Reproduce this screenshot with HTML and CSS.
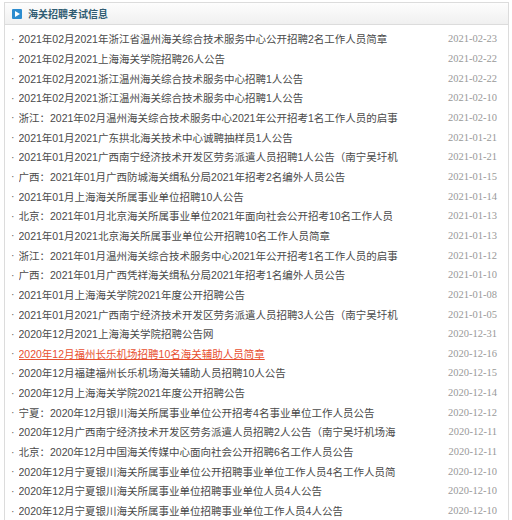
FILE: index.html
```html
<!DOCTYPE html>
<html lang="zh-CN">
<head>
  <meta charset="UTF-8">
  <title>海关招聘考试信息</title>
  <link rel="stylesheet" href="styles.css">
</head>
<body>
  <div class="box">
    <div class="box-head">
      <span class="head-icon"></span>
      <h3>海关招聘考试信息</h3>
    </div>
    <ul class="news-list">
      <li><a href="#">2021年02月2021年浙江省温州海关综合技术服务中心公开招聘2名工作人员简章</a><span class="date">2021-02-23</span></li>
      <li><a href="#">2021年02月2021上海海关学院招聘26人公告</a><span class="date">2021-02-22</span></li>
      <li><a href="#">2021年02月2021浙江温州海关综合技术服务中心招聘1人公告</a><span class="date">2021-02-22</span></li>
      <li><a href="#">2021年02月2021浙江温州海关综合技术服务中心招聘1人公告</a><span class="date">2021-02-10</span></li>
      <li><a href="#">浙江：2021年02月温州海关综合技术服务中心2021年公开招考1名工作人员的启事</a><span class="date">2021-02-10</span></li>
      <li><a href="#">2021年01月2021广东拱北海关技术中心诚聘抽样员1人公告</a><span class="date">2021-01-21</span></li>
      <li><a href="#">2021年01月2021广西南宁经济技术开发区劳务派遣人员招聘1人公告（南宁吴圩机</a><span class="date">2021-01-21</span></li>
      <li><a href="#">广西：2021年01月广西防城海关缉私分局2021年招考2名编外人员公告</a><span class="date">2021-01-15</span></li>
      <li><a href="#">2021年01月上海海关所属事业单位招聘10人公告</a><span class="date">2021-01-14</span></li>
      <li><a href="#">北京：2021年01月北京海关所属事业单位2021年面向社会公开招考10名工作人员</a><span class="date">2021-01-13</span></li>
      <li><a href="#">2021年01月2021北京海关所属事业单位公开招聘10名工作人员简章</a><span class="date">2021-01-13</span></li>
      <li><a href="#">浙江：2021年01月温州海关综合技术服务中心2021年公开招考1名工作人员的启事</a><span class="date">2021-01-12</span></li>
      <li><a href="#">广西：2021年01月广西凭祥海关缉私分局2021年招考1名编外人员公告</a><span class="date">2021-01-10</span></li>
      <li><a href="#">2021年01月上海海关学院2021年度公开招聘公告</a><span class="date">2021-01-08</span></li>
      <li><a href="#">2021年01月2021广西南宁经济技术开发区劳务派遣人员招聘3人公告（南宁吴圩机</a><span class="date">2021-01-05</span></li>
      <li><a href="#">2020年12月2021上海海关学院招聘公告网</a><span class="date">2020-12-31</span></li>
      <li class="hot"><a href="#">2020年12月福州长乐机场招聘10名海关辅助人员简章</a><span class="date">2020-12-16</span></li>
      <li><a href="#">2020年12月福建福州长乐机场海关辅助人员招聘10人公告</a><span class="date">2020-12-15</span></li>
      <li><a href="#">2020年12月上海海关学院2021年度公开招聘公告</a><span class="date">2020-12-14</span></li>
      <li><a href="#">宁夏：2020年12月银川海关所属事业单位公开招考4名事业单位工作人员公告</a><span class="date">2020-12-12</span></li>
      <li><a href="#">2020年12月广西南宁经济技术开发区劳务派遣人员招聘2人公告（南宁吴圩机场海</a><span class="date">2020-12-11</span></li>
      <li><a href="#">北京：2020年12月中国海关传媒中心面向社会公开招聘6名工作人员公告</a><span class="date">2020-12-11</span></li>
      <li><a href="#">2020年12月宁夏银川海关所属事业单位公开招聘事业单位工作人员4名工作人员简</a><span class="date">2020-12-10</span></li>
      <li><a href="#">2020年12月宁夏银川海关所属事业单位招聘事业单位人员4人公告</a><span class="date">2020-12-10</span></li>
      <li><a href="#">2020年12月宁夏银川海关所属事业单位招聘事业单位工作人员4人公告</a><span class="date">2020-12-10</span></li>
    </ul>
  </div>
</body>
</html>
```

FILE: styles.css
```css
body {
  margin: 0;
  background: #fff;
  font-family: "Liberation Sans", "Noto Sans CJK SC", sans-serif;
}
.box {
  margin: 2px 3px 0 4px;
  border: 1px solid #dcdcdc;
  border-bottom: none;
  height: 520px;
}
.box-head {
  height: 21px;
  display: flex;
  align-items: center;
  padding-left: 7px;
  background: linear-gradient(#fdfdfd, #f0f0f0);
  border-bottom: 1px solid #dcdcdc;
}
.head-icon {
  width: 10px;
  height: 10px;
  background: #2c8ccf;
  border-radius: 1px;
  position: relative;
  margin-right: 6px;
}
.head-icon::after {
  content: "";
  position: absolute;
  left: 3px;
  top: 2px;
  border-left: 5px solid #fff;
  border-top: 3px solid transparent;
  border-bottom: 3px solid transparent;
}
.box-head h3 {
  margin: 0;
  font-size: 10px;
  font-weight: bold;
  color: #2f5c72;
  font-family: "Noto Sans CJK SC", sans-serif;
}
.news-list {
  list-style: none;
  margin: 0;
  padding: 4px 11px 0 6px;
}
.news-list li {
  display: flex;
  align-items: center;
  height: 19.67px;
  font-size: 10.5px;
  color: #555;
  white-space: nowrap;
}
.news-list li::before {
  content: "·";
  margin-right: 4px;
  color: #666;
}
.news-list a {
  flex: 1;
  overflow: hidden;
  color: #4a4a4a;
  text-decoration: none;
}
.news-list .hot a {
  color: #e8502f;
  text-decoration: underline;
}
.date {
  margin-left: 8px;
  color: #999;
  font-family: "Liberation Serif", serif;
  font-size: 10.5px;
}
```
